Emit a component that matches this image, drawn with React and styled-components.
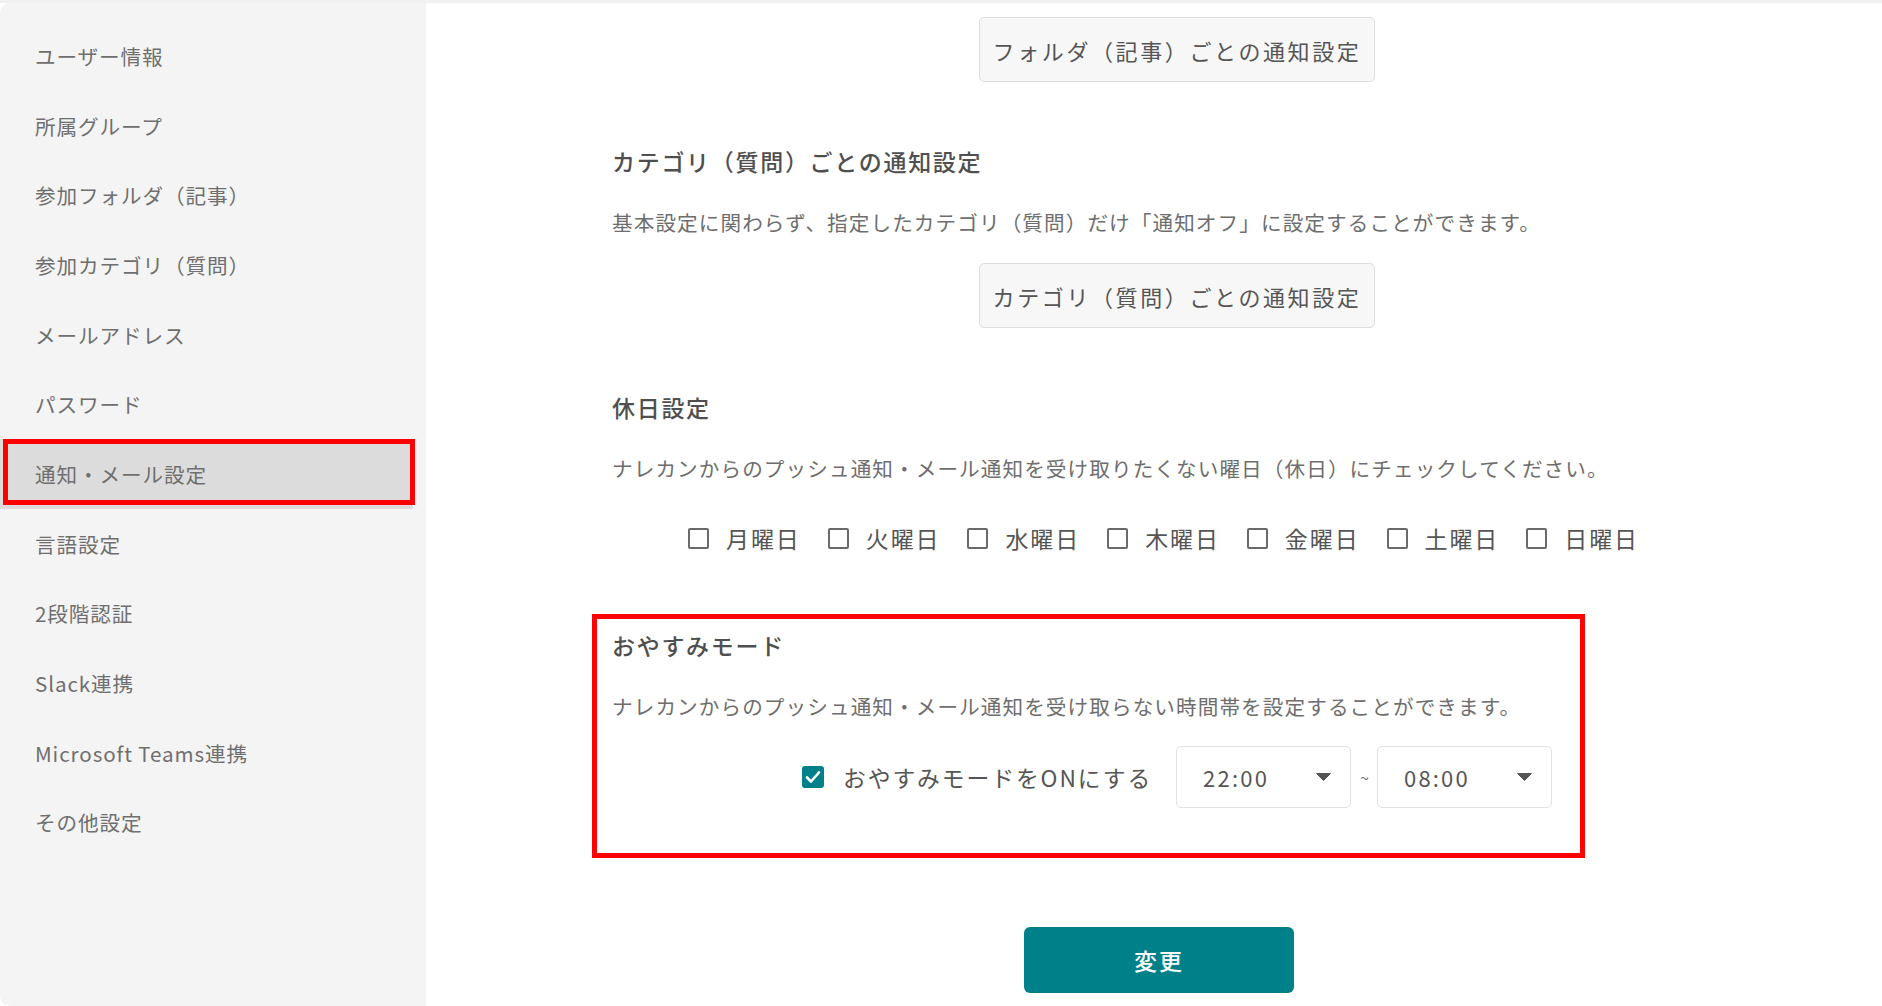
import React from 'react'
import styled, { createGlobalStyle } from 'styled-components'

const GlobalStyle = createGlobalStyle`
  html, body {
    margin: 0;
    padding: 0;
    background: #fff;
  }
  body {
    font-family: "Noto Sans CJK JP", "Noto Sans", sans-serif;
    color: #555;
  }
  *, *::before, *::after { box-sizing: border-box; }
`

const Page = styled.div`
  display: flex;
  min-height: 100vh;
  border-top: 3px solid #f1f1f1;
`

const Sidebar = styled.nav`
  width: 426px;
  flex-shrink: 0;
  min-height: calc(100vh - 3px);
  background: #f4f4f4;
  border-radius: 10px 0 0 10px;
  padding-top: 18px;
`

const NavItem = styled.div`
  position: relative;
  display: flex;
  align-items: center;
  height: 69.7px;
  width: calc(100% - 13px);
  padding-left: 35px;
  font-size: 20.6px;
  letter-spacing: 0.9px;
  color: #6f6f6f;
  background: ${p => (p.$active ? '#dcdcdc' : 'transparent')};

  ${p => p.$active && `
    &::after {
      content: "";
      position: absolute;
      top: 0;
      left: 3px;
      right: -2px;
      bottom: 4px;
      border: 5px solid #ff0000;
    }
  `}
`

const Main = styled.main`
  flex: 1;
  padding-top: 14px;
`

const Column = styled.div`
  width: 1130px;
  margin-left: 186px;
`

const Section = styled.section`
  position: relative;
  margin-top: ${p => p.$top || 0}px;

  ${p => p.$marked && `
    &::before {
      content: "";
      position: absolute;
      top: -15px;
      left: -20px;
      width: 993px;
      height: 244px;
      border: 5px solid #ff0000;
      pointer-events: none;
    }
  `}
`

const Heading = styled.h2`
  margin: 0;
  font-size: 23px;
  line-height: 32px;
  font-weight: 500;
  letter-spacing: 1.7px;
  color: #4f4f4f;
`

const Description = styled.p`
  margin: ${p => p.$top || 0}px 0 0;
  font-size: 20.6px;
  line-height: 30px;
  letter-spacing: 1.1px;
  color: #6e6e6e;
`

const CenterRow = styled.div`
  display: flex;
  justify-content: center;
  align-items: center;
  margin-top: ${p => p.$top || 0}px;
`

const SubButton = styled.button`
  width: 396px;
  height: 65px;
  background: #f7f7f7;
  border: 1px solid #dedede;
  border-radius: 5px;
  font-family: inherit;
  font-size: 22px;
  letter-spacing: 2.6px;
  color: #555;
  cursor: pointer;
`

const DayRow = styled.div`
  display: flex;
  justify-content: center;
  align-items: center;
  height: 32px;
  margin-top: 39px;
`

const DayItem = styled.label`
  display: flex;
  align-items: center;
  margin-right: 27px;
  font-size: 23px;
  letter-spacing: 1.9px;
  color: #555;
`

const Box = styled.span`
  display: inline-flex;
  align-items: center;
  justify-content: center;
  width: ${p => p.$size || 21}px;
  height: ${p => p.$size || 21}px;
  margin-right: ${p => p.$gap || 17}px;
  border-radius: ${p => (p.$checked ? 3 : 2)}px;
  border: ${p => (p.$checked ? 'none' : '2px solid #6a6a6a')};
  background: ${p => (p.$checked ? '#00818a' : '#fff')};
  flex-shrink: 0;
`

const OptionRow = styled.div`
  display: flex;
  justify-content: center;
  align-items: center;
  height: 62px;
  margin-top: 25px;
`

const OptionLabel = styled.label`
  display: flex;
  align-items: center;
  margin-right: 24px;
  font-size: 22.8px;
  letter-spacing: 1.9px;
  color: #555;
`

const TimeSelect = styled.div`
  display: flex;
  align-items: center;
  justify-content: space-between;
  width: 175px;
  height: 62px;
  padding: 0 19px 0 26px;
  border: 1px solid #e2e2e2;
  border-radius: 5px;
  font-size: 22px;
  letter-spacing: 2.2px;
  color: #555;
`

const Tilde = styled.span`
  margin: 0 8px 0 9px;
  font-size: 16px;
  color: #777;
`

const ActionRow = styled.div`
  display: flex;
  justify-content: center;
  padding-left: 10px;
  margin-top: 119px;
`

const PrimaryButton = styled.button`
  width: 270px;
  height: 66px;
  border: none;
  border-radius: 6px;
  background: #00818a;
  color: #fff;
  font-family: inherit;
  font-size: 23px;
  font-weight: 500;
  letter-spacing: 2px;
  cursor: pointer;
`

const navItems = [
  'ユーザー情報',
  '所属グループ',
  '参加フォルダ（記事）',
  '参加カテゴリ（質問）',
  'メールアドレス',
  'パスワード',
  '通知・メール設定',
  '言語設定',
  '2段階認証',
  'Slack連携',
  'Microsoft Teams連携',
  'その他設定',
]

const days = ['月曜日', '火曜日', '水曜日', '木曜日', '金曜日', '土曜日', '日曜日']

function Caret() {
  return (
    <svg width="15" height="8" viewBox="0 0 15 8">
      <path d="M0.5 0.5 H14.5 L7.5 7.5 Z" fill="#555" stroke="#555" strokeLinejoin="round" />
    </svg>
  )
}

function Check() {
  return (
    <svg width="16" height="14" viewBox="0 0 16 14">
      <path d="M2 7.5 L6 11.5 L14 2.5" fill="none" stroke="#fff" strokeWidth="2.6" strokeLinecap="round" strokeLinejoin="round" />
    </svg>
  )
}

export default function App() {
  return (
    <>
      <GlobalStyle />
      <Page>
        <Sidebar>
          {navItems.map(item => (
            <NavItem key={item} $active={item === '通知・メール設定'}>{item}</NavItem>
          ))}
        </Sidebar>

        <Main>
          <Column>
            <CenterRow>
              <SubButton>フォルダ（記事）ごとの通知設定</SubButton>
            </CenterRow>

            <Section $top={63}>
              <Heading>カテゴリ（質問）ごとの通知設定</Heading>
              <Description $top={30}>
                基本設定に関わらず、指定したカテゴリ（質問）だけ「通知オフ」に設定することができます。
              </Description>
              <CenterRow $top={26}>
                <SubButton>カテゴリ（質問）ごとの通知設定</SubButton>
              </CenterRow>
            </Section>

            <Section $top={63}>
              <Heading>休日設定</Heading>
              <Description $top={30}>
                ナレカンからのプッシュ通知・メール通知を受け取りたくない曜日（休日）にチェックしてください。
              </Description>
              <DayRow>
                {days.map(d => (
                  <DayItem key={d}>
                    <Box />
                    {d}
                  </DayItem>
                ))}
              </DayRow>
            </Section>

            <Section $top={75} $marked>
              <Heading>おやすみモード</Heading>
              <Description $top={30}>
                ナレカンからのプッシュ通知・メール通知を受け取らない時間帯を設定することができます。
              </Description>
              <OptionRow>
                <OptionLabel>
                  <Box $checked $size={22} $gap={19}>
                    <Check />
                  </Box>
                  おやすみモードをONにする
                </OptionLabel>
                <TimeSelect>
                  <span>22:00</span>
                  <Caret />
                </TimeSelect>
                <Tilde>~</Tilde>
                <TimeSelect>
                  <span>08:00</span>
                  <Caret />
                </TimeSelect>
              </OptionRow>
            </Section>
          </Column>

          <ActionRow>
            <PrimaryButton>変更</PrimaryButton>
          </ActionRow>
        </Main>
      </Page>
    </>
  )
}
